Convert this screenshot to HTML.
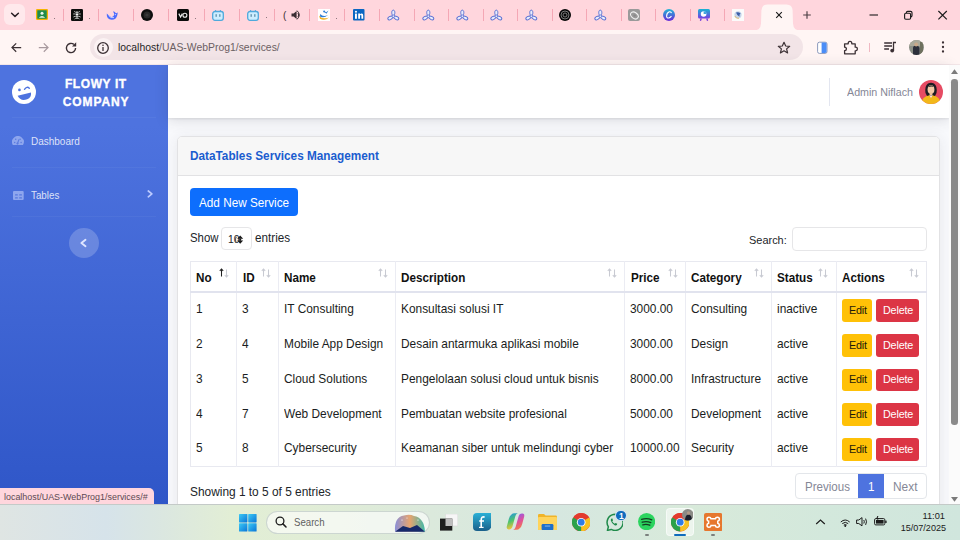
<!DOCTYPE html><html><head><meta charset="utf-8"><style>
*{box-sizing:border-box;margin:0;padding:0}
html,body{width:960px;height:540px;overflow:hidden;font-family:"Liberation Sans",sans-serif;background:#f8f9fc}
.a{position:absolute}
.t{position:absolute;white-space:nowrap;line-height:1}
</style></head><body><div class="a" style="left:0px;top:0px;width:960px;height:30px;background:#ffd6dd"></div>
<div class="a" style="left:0px;top:30px;width:960px;height:35px;background:#fff5f4"></div>
<div class="a" style="left:0px;top:64px;width:960px;height:1px;background:#f3e6e8"></div>
<div class="a" style="left:4px;top:4px;width:21px;height:21px;background:#ffe9ec;border-radius:6px"></div>
<svg class="a" style="left:9px;top:10px;" width="12" height="10" viewBox="0 0 12 10"><path d="M2.6 3.2 L6 6.4 L9.4 3.2" stroke="#2a2126" stroke-width="1.5" fill="none" stroke-linecap="round" stroke-linejoin="round"/></svg>
<svg class="a" style="left:35.7px;top:9px;" width="12" height="12" viewBox="0 0 12 12"><rect x="0.6" y="0.6" width="10.8" height="9.8" rx="1" fill="#1f8b4c" stroke="#f5b400" stroke-width="1.3"/><circle cx="6" cy="4.2" r="1.5" fill="#e8f5e9"/><path d="M2.8 8.8 Q6 5.3 9.2 8.8Z" fill="#e8f5e9"/></svg>
<div class="a" style="left:62.5px;top:9.3px;width:1px;height:11.5px;background:#f4a7b5"></div>
<svg class="a" style="left:70.8px;top:9px;" width="12" height="12" viewBox="0 0 12 12"><rect x="0" y="0" width="12" height="12" rx="1.2" fill="#0c0c0c"/><g stroke="#e8e8e8" stroke-width=".75" fill="none"><path d="M6 2 V10"/><path d="M3.2 2.4 Q4.6 3.6 6 3.4 Q7.4 3.6 8.8 2.4"/><path d="M2.2 5 Q4 4.6 6 5.6 Q8 4.6 9.8 5"/><path d="M2.4 8 Q4 6.8 6 7.4 Q8 6.8 9.6 8"/><path d="M3.6 10 Q4.8 8.8 6 9.2 Q7.2 8.8 8.4 10"/></g><circle cx="6" cy="5.6" r="1" fill="#fff"/></svg>
<div class="a" style="left:97.6px;top:9.3px;width:1px;height:11.5px;background:#f4a7b5"></div>
<svg class="a" style="left:105.9px;top:9px;" width="12" height="12" viewBox="0 0 12 12"><path d="M0.8 4.6 Q0.2 10.4 5.8 10.8 Q10.2 10.8 11.2 6.6 Q11.8 4.6 11.6 3.2 Q10.8 4.4 9.8 4.2 Q9 2 7 2.6 Q8.8 4.4 7.9 6.6 Q6.6 8.8 4.2 7.4 Q2.2 6 0.8 4.6Z" fill="#4d6bfe"/><path d="M2.6 6.4 Q4.6 9.6 8 8.6" stroke="#dfe4ff" stroke-width=".8" fill="none"/><circle cx="9.3" cy="5.6" r=".65" fill="#dfe4ff"/></svg>
<div class="a" style="left:132.7px;top:9.3px;width:1px;height:11.5px;background:#f4a7b5"></div>
<svg class="a" style="left:141.3px;top:9px;" width="12" height="12" viewBox="0 0 12 12"><circle cx="6" cy="6" r="6" fill="#0e0e0e"/><circle cx="6" cy="6" r="3.5" fill="#2a2a2a"/><circle cx="6" cy="6" r="1.6" fill="#3a3a3a"/></svg>
<div class="a" style="left:168.1px;top:9.3px;width:1px;height:11.5px;background:#f4a7b5"></div>
<svg class="a" style="left:176.8px;top:9px;" width="12" height="12" viewBox="0 0 12 12"><rect x="0" y="0" width="12" height="12" rx="1.6" fill="#0a0a0a"/><path d="M1.8 4.6 L3.6 8 L5.4 4.6" stroke="#eee" stroke-width="1.2" fill="none"/><circle cx="7.9" cy="6.3" r="2" stroke="#eee" stroke-width="1.1" fill="none"/></svg>
<div class="a" style="left:203.6px;top:9.3px;width:1px;height:11.5px;background:#f4a7b5"></div>
<svg class="a" style="left:211.9px;top:9px;" width="12" height="12" viewBox="0 0 12 12"><path d="M3.2 1 L4.6 2.6 M8.8 1 L7.4 2.6" stroke="#4fa9dc" stroke-width="1"/><rect x="0.7" y="2.5" width="10.6" height="8.8" rx="2.2" fill="#cdeeff" stroke="#4fa9dc" stroke-width="1.3"/><rect x="3.6" y="5.2" width="1.1" height="2.6" fill="#4b7f9c"/><rect x="7.3" y="5.2" width="1.1" height="2.6" fill="#4b7f9c"/></svg>
<div class="a" style="left:238.7px;top:9.3px;width:1px;height:11.5px;background:#f4a7b5"></div>
<svg class="a" style="left:247.1px;top:9px;" width="12" height="12" viewBox="0 0 12 12"><path d="M3.2 1 L4.6 2.6 M8.8 1 L7.4 2.6" stroke="#4fa9dc" stroke-width="1"/><rect x="0.7" y="2.5" width="10.6" height="8.8" rx="2.2" fill="#cdeeff" stroke="#4fa9dc" stroke-width="1.3"/><rect x="3.6" y="5.2" width="1.1" height="2.6" fill="#4b7f9c"/><rect x="7.3" y="5.2" width="1.1" height="2.6" fill="#4b7f9c"/></svg>
<div class="a" style="left:273.9px;top:9.3px;width:1px;height:11.5px;background:#f4a7b5"></div>
<div class="a" style="left:309.0px;top:9.3px;width:1px;height:11.5px;background:#f4a7b5"></div>
<svg class="a" style="left:317.5px;top:9px;" width="12" height="12" viewBox="0 0 12 12"><rect x="0" y="0" width="12" height="12" fill="#fff"/><path d="M1 6.5 Q4 11 11 8.4 Q7 12.5 2 9.8Z" fill="#f0b020"/><path d="M2.2 5 Q5 8.5 10 6 Q6 9.8 2 7.5Z" fill="#2d7fd6"/><path d="M4.5 1.5 L8.5 4.8 L10.5 1.5 L8.2 3.2Z" fill="#2d7fd6"/><circle cx="6.2" cy="2.4" r="1" fill="#2d7fd6"/></svg>
<div class="a" style="left:344.3px;top:9.3px;width:1px;height:11.5px;background:#f4a7b5"></div>
<svg class="a" style="left:352.5px;top:9px;" width="12" height="12" viewBox="0 0 12 12"><rect x="0" y="0" width="11.5" height="11.5" rx="1" fill="#0a66c2"/><rect x="2" y="4.6" width="1.9" height="5.2" fill="#fff"/><circle cx="2.95" cy="2.7" r="1.05" fill="#fff"/><path d="M5.2 4.6 H7 V5.4 Q7.6 4.4 8.8 4.5 Q10.2 4.6 10.2 6.4 V9.8 H8.4 V6.8 Q8.4 5.9 7.8 5.9 Q7 5.9 7 6.9 V9.8 H5.2Z" fill="#fff"/></svg>
<div class="a" style="left:379.3px;top:9.3px;width:1px;height:11.5px;background:#f4a7b5"></div>
<svg class="a" style="left:387.1px;top:8.8px;" width="13" height="12" viewBox="0 0 13 12"><g fill="#e8ecfc" stroke="#5a70d2" stroke-width="1"><path d="M6.3 7.2 C4.2 5.6 4.3 1.1 6.3 1.1 C8.3 1.1 8.4 5.6 6.3 7.2Z"/><path d="M6.3 7.2 C4.2 5.6 4.3 1.1 6.3 1.1 C8.3 1.1 8.4 5.6 6.3 7.2Z" transform="rotate(120 6.3 7.2)"/><path d="M6.3 7.2 C4.2 5.6 4.3 1.1 6.3 1.1 C8.3 1.1 8.4 5.6 6.3 7.2Z" transform="rotate(240 6.3 7.2)"/></g><circle cx="6.3" cy="7.2" r="1.3" fill="#e8ecfc" stroke="#5a70d2" stroke-width=".8"/></svg>
<div class="a" style="left:413.9px;top:9.3px;width:1px;height:11.5px;background:#f4a7b5"></div>
<svg class="a" style="left:421.6px;top:8.8px;" width="13" height="12" viewBox="0 0 13 12"><g fill="#e8ecfc" stroke="#5a70d2" stroke-width="1"><path d="M6.3 7.2 C4.2 5.6 4.3 1.1 6.3 1.1 C8.3 1.1 8.4 5.6 6.3 7.2Z"/><path d="M6.3 7.2 C4.2 5.6 4.3 1.1 6.3 1.1 C8.3 1.1 8.4 5.6 6.3 7.2Z" transform="rotate(120 6.3 7.2)"/><path d="M6.3 7.2 C4.2 5.6 4.3 1.1 6.3 1.1 C8.3 1.1 8.4 5.6 6.3 7.2Z" transform="rotate(240 6.3 7.2)"/></g><circle cx="6.3" cy="7.2" r="1.3" fill="#e8ecfc" stroke="#5a70d2" stroke-width=".8"/></svg>
<div class="a" style="left:448.4px;top:9.3px;width:1px;height:11.5px;background:#f4a7b5"></div>
<svg class="a" style="left:456.0px;top:8.8px;" width="13" height="12" viewBox="0 0 13 12"><g fill="#e8ecfc" stroke="#5a70d2" stroke-width="1"><path d="M6.3 7.2 C4.2 5.6 4.3 1.1 6.3 1.1 C8.3 1.1 8.4 5.6 6.3 7.2Z"/><path d="M6.3 7.2 C4.2 5.6 4.3 1.1 6.3 1.1 C8.3 1.1 8.4 5.6 6.3 7.2Z" transform="rotate(120 6.3 7.2)"/><path d="M6.3 7.2 C4.2 5.6 4.3 1.1 6.3 1.1 C8.3 1.1 8.4 5.6 6.3 7.2Z" transform="rotate(240 6.3 7.2)"/></g><circle cx="6.3" cy="7.2" r="1.3" fill="#e8ecfc" stroke="#5a70d2" stroke-width=".8"/></svg>
<div class="a" style="left:482.8px;top:9.3px;width:1px;height:11.5px;background:#f4a7b5"></div>
<svg class="a" style="left:490.4px;top:8.8px;" width="13" height="12" viewBox="0 0 13 12"><g fill="#e8ecfc" stroke="#5a70d2" stroke-width="1"><path d="M6.3 7.2 C4.2 5.6 4.3 1.1 6.3 1.1 C8.3 1.1 8.4 5.6 6.3 7.2Z"/><path d="M6.3 7.2 C4.2 5.6 4.3 1.1 6.3 1.1 C8.3 1.1 8.4 5.6 6.3 7.2Z" transform="rotate(120 6.3 7.2)"/><path d="M6.3 7.2 C4.2 5.6 4.3 1.1 6.3 1.1 C8.3 1.1 8.4 5.6 6.3 7.2Z" transform="rotate(240 6.3 7.2)"/></g><circle cx="6.3" cy="7.2" r="1.3" fill="#e8ecfc" stroke="#5a70d2" stroke-width=".8"/></svg>
<div class="a" style="left:517.2px;top:9.3px;width:1px;height:11.5px;background:#f4a7b5"></div>
<svg class="a" style="left:524.7px;top:8.8px;" width="13" height="12" viewBox="0 0 13 12"><g fill="#e8ecfc" stroke="#5a70d2" stroke-width="1"><path d="M6.3 7.2 C4.2 5.6 4.3 1.1 6.3 1.1 C8.3 1.1 8.4 5.6 6.3 7.2Z"/><path d="M6.3 7.2 C4.2 5.6 4.3 1.1 6.3 1.1 C8.3 1.1 8.4 5.6 6.3 7.2Z" transform="rotate(120 6.3 7.2)"/><path d="M6.3 7.2 C4.2 5.6 4.3 1.1 6.3 1.1 C8.3 1.1 8.4 5.6 6.3 7.2Z" transform="rotate(240 6.3 7.2)"/></g><circle cx="6.3" cy="7.2" r="1.3" fill="#e8ecfc" stroke="#5a70d2" stroke-width=".8"/></svg>
<div class="a" style="left:551.5px;top:9.3px;width:1px;height:11.5px;background:#f4a7b5"></div>
<svg class="a" style="left:559.2px;top:9px;" width="12" height="12" viewBox="0 0 12 12"><circle cx="6" cy="6" r="6" fill="#050505"/><circle cx="6" cy="6" r="4" fill="none" stroke="#777" stroke-width="1"/><circle cx="6" cy="6" r="2" fill="none" stroke="#888" stroke-width=".9"/></svg>
<div class="a" style="left:586.0px;top:9.3px;width:1px;height:11.5px;background:#f4a7b5"></div>
<svg class="a" style="left:593.8px;top:8.8px;" width="13" height="12" viewBox="0 0 13 12"><g fill="#e8ecfc" stroke="#5a70d2" stroke-width="1"><path d="M6.3 7.2 C4.2 5.6 4.3 1.1 6.3 1.1 C8.3 1.1 8.4 5.6 6.3 7.2Z"/><path d="M6.3 7.2 C4.2 5.6 4.3 1.1 6.3 1.1 C8.3 1.1 8.4 5.6 6.3 7.2Z" transform="rotate(120 6.3 7.2)"/><path d="M6.3 7.2 C4.2 5.6 4.3 1.1 6.3 1.1 C8.3 1.1 8.4 5.6 6.3 7.2Z" transform="rotate(240 6.3 7.2)"/></g><circle cx="6.3" cy="7.2" r="1.3" fill="#e8ecfc" stroke="#5a70d2" stroke-width=".8"/></svg>
<div class="a" style="left:620.6px;top:9.3px;width:1px;height:11.5px;background:#f4a7b5"></div>
<svg class="a" style="left:628.4px;top:9px;" width="12" height="12" viewBox="0 0 12 12"><rect x="0" y="0" width="12" height="12" rx="2" fill="#9a9a9a"/><ellipse cx="6.4" cy="6.4" rx="4.2" ry="3" transform="rotate(35 6.4 6.4)" fill="none" stroke="#f2f2f2" stroke-width="1.1"/><circle cx="6.6" cy="6.6" r="1.2" fill="#888"/></svg>
<div class="a" style="left:655.2px;top:9.3px;width:1px;height:11.5px;background:#f4a7b5"></div>
<svg class="a" style="left:662.9px;top:9px;" width="12" height="12" viewBox="0 0 12 12"><defs><linearGradient id="cg" x1="0" y1="0" x2="0" y2="1"><stop offset="0" stop-color="#1fb7d6"/><stop offset="1" stop-color="#6a2ad8"/></linearGradient></defs><circle cx="6" cy="6" r="6" fill="url(#cg)"/><path d="M8.3 3.6 Q7.6 2.4 6.3 2.8 Q3.6 3.8 3.6 7.2 Q3.8 9.4 6 8.9 Q7.5 8.5 8.2 7.4" stroke="#fff" stroke-width="1.1" fill="none" stroke-linecap="round"/></svg>
<div class="a" style="left:689.7px;top:9.3px;width:1px;height:11.5px;background:#f4a7b5"></div>
<svg class="a" style="left:697.5px;top:9px;" width="12" height="12" viewBox="0 0 12 12"><defs><linearGradient id="pg" x1="0" y1="0" x2="0" y2="1"><stop offset="0" stop-color="#17b5d3"/><stop offset="1" stop-color="#7a3be3"/></linearGradient></defs><rect x="0" y="0" width="12" height="9.6" rx="1.5" fill="url(#pg)"/><path d="M3.2 9.5 L2.4 11.8 M8.8 9.5 L9.6 11.8" stroke="#6d35dc" stroke-width="1.3"/><circle cx="5.6" cy="5" r="2.8" fill="#fff"/><path d="M5.6 5 V2.2 A2.8 2.8 0 0 1 8.4 5Z" fill="#40a6dc"/></svg>
<div class="a" style="left:724.3px;top:9.3px;width:1px;height:11.5px;background:#f4a7b5"></div>
<svg class="a" style="left:732.0px;top:9px;" width="12" height="12" viewBox="0 0 12 12"><rect x="0" y="0" width="12" height="12" fill="#fbfbfb"/><circle cx="6" cy="5.8" r="3.6" fill="#c6d5ea"/><path d="M4 3.5 Q6.5 2.5 8.6 4.5 Q7 5.5 7.5 7.8 Q5.3 7 4 3.5Z" fill="#3b5fa8"/><path d="M2.8 7 Q4 9.8 7 9.3" stroke="#e3b860" stroke-width=".9" fill="none"/></svg>
<div class="t" style="left:283.20px;top:10.44px;font-size:10.70px;color:#3a2e33;font-weight:400;transform:scaleX(0.9346);transform-origin:0 0;">(</div>
<svg class="a" style="left:290px;top:9px;" width="12" height="12" viewBox="0 0 12 12"><path d="M1.5 4.5 H3.6 L6.6 2 V10 L3.6 7.5 H1.5Z" fill="#3a2e33"/><path d="M8 4 Q9.3 6 8 8" stroke="#3a2e33" stroke-width="1" fill="none"/><path d="M7 1.6 Q11.6 6 7 10.4" stroke="#3a2e33" stroke-width="1" fill="none"/></svg>
<div class="a" style="left:54.0px;top:17.5px;width:1.1px;height:1.1px;background:#6b5a60;border-radius:50%"></div>
<div class="a" style="left:89.1px;top:17.9px;width:1.1px;height:1.1px;background:#6b5a60;border-radius:50%"></div>
<div class="a" style="left:194.8px;top:18.0px;width:1.1px;height:1.1px;background:#6b5a60;border-radius:50%"></div>
<div class="a" style="left:265.5px;top:17.0px;width:1.1px;height:1.1px;background:#6b5a60;border-radius:50%"></div>
<div class="a" style="left:336.3px;top:17.5px;width:1.1px;height:1.1px;background:#6b5a60;border-radius:50%"></div>
<svg class="a" style="left:754px;top:4px" width="46" height="27" viewBox="0 0 46 27"><path d="M0 26.5 Q6.5 26.5 7 19.5 L7.4 6.5 Q7.6 0.4 13.5 0.4 L32.5 0.4 Q38.4 0.4 38.6 6.5 L39 19.5 Q39.5 26.5 46 26.5 Z" fill="#fff5f4"/></svg>
<svg class="a" style="left:774px;top:10px;" width="10" height="10" viewBox="0 0 10 10"><path d="M2.2 2.2 L7.8 7.8 M7.8 2.2 L2.2 7.8" stroke="#1b1b1b" stroke-width="1.15"/></svg>
<svg class="a" style="left:800.7px;top:9px;" width="12" height="12" viewBox="0 0 12 12"><path d="M6 2.2 V9.8 M2.2 6 H9.8" stroke="#4a3d42" stroke-width="1.15"/></svg>
<svg class="a" style="left:866px;top:9px;" width="14" height="12" viewBox="0 0 14 12"><path d="M3.5 6 H12" stroke="#1b1b1b" stroke-width="1.1"/></svg>
<svg class="a" style="left:901px;top:8px;" width="14" height="14" viewBox="0 0 14 14"><rect x="3.6" y="5.2" width="6" height="6" rx="1.2" fill="none" stroke="#1b1b1b" stroke-width="1.15"/><path d="M5.4 5.1 V4.6 Q5.4 3.3 6.7 3.3 H9.6 Q11 3.3 11 4.7 V7.6 Q11 8.9 9.7 8.9 H9.6" fill="none" stroke="#1b1b1b" stroke-width="1.15"/></svg>
<svg class="a" style="left:935px;top:8px;" width="14" height="14" viewBox="0 0 14 14"><path d="M3.4 3 L11.8 11.4 M11.8 3 L3.4 11.4" stroke="#1b1b1b" stroke-width="1.15"/></svg>
<div class="a" style="left:90px;top:34.2px;width:713px;height:25.6px;background:#f2e4e7;border-radius:13px"></div>
<div class="a" style="left:93.5px;top:37.5px;width:19px;height:19px;background:#fbf2f3;border-radius:50%"></div>
<svg class="a" style="left:10px;top:41px;" width="14" height="14" viewBox="0 0 14 14"><path d="M11.2 6.6 H2.2 M6.2 2.4 L2 6.6 L6.2 10.8" stroke="#3b3034" stroke-width="1.25" fill="none"/></svg>
<svg class="a" style="left:37px;top:41px;" width="14" height="14" viewBox="0 0 14 14"><path d="M1.8 6.6 H10.8 M6.8 2.4 L11 6.6 L6.8 10.8" stroke="#a8999e" stroke-width="1.25" fill="none"/></svg>
<svg class="a" style="left:63.6px;top:40.6px;" width="14" height="14" viewBox="0 0 14 14"><path d="M11.6 7 A4.6 4.6 0 1 1 9.9 3.4" stroke="#3b3034" stroke-width="1.4" fill="none"/><path d="M12.2 1.2 V5.4 H8" fill="#3b3034"/></svg>
<svg class="a" style="left:96.3px;top:40.6px;" width="14" height="14" viewBox="0 0 14 14"><circle cx="7" cy="7" r="5.3" stroke="#3b3034" stroke-width="1.3" fill="none"/><rect x="6.35" y="6" width="1.3" height="4" fill="#3b3034"/><circle cx="7" cy="4.2" r=".8" fill="#3b3034"/></svg>
<svg class="a" style="left:777px;top:41px;" width="14" height="14" viewBox="0 0 14 14"><path d="M7 1.3 L8.7 5 L12.7 5.3 L9.6 7.9 L10.6 11.9 L7 9.8 L3.4 11.9 L4.4 7.9 L1.3 5.3 L5.3 5 Z" stroke="#3b3034" stroke-width="1.2" fill="none" stroke-linejoin="round"/></svg>
<svg class="a" style="left:815px;top:39px;" width="14" height="17" viewBox="0 0 14 17"><rect x="2.6" y="3.2" width="9.4" height="11.2" rx="1.8" fill="#fff" stroke="#7f8fb5" stroke-width=".9"/><path d="M6.6 3.6 H10.2 Q11.6 3.6 11.6 5 V12.6 Q11.6 14 10.2 14 H6.6Z" fill="#4b8df7"/></svg>
<svg class="a" style="left:842.5px;top:40px;" width="16" height="15" viewBox="0 0 16 15"><path d="M1.6 3.8 H5.2 V3.4 Q5.2 1.4 7 1.4 Q8.8 1.4 8.8 3.4 V3.8 H12.2 V7.2 H12.6 Q14.4 7.2 14.4 9 Q14.4 10.8 12.6 10.8 H12.2 V13.8 H1.6 V10.6 Q3.4 10.6 3.4 8.9 Q3.4 7.2 1.6 7.2Z" stroke="#3b3034" stroke-width="1.3" fill="none" stroke-linejoin="round"/></svg>
<div class="a" style="left:869px;top:42.5px;width:1px;height:9.5px;background:#f0b8c2"></div>
<svg class="a" style="left:883px;top:40px;" width="14" height="14" viewBox="0 0 14 14"><path d="M1.2 3 H9 M1.2 6 H9 M1.2 9 H6" stroke="#3b3034" stroke-width="1.3"/><circle cx="9.2" cy="10.6" r="1.9" fill="#3b3034"/><path d="M10.5 10.6 V2.5 H13" stroke="#3b3034" stroke-width="1.3" fill="none"/></svg>
<svg class="a" style="left:909px;top:40px;" width="15" height="15" viewBox="0 0 15 15"><defs><clipPath id="pa"><circle cx="7.5" cy="7.5" r="7.5"/></clipPath></defs><g clip-path="url(#pa)"><rect width="15" height="15" fill="#8b8f86"/><rect x="0" y="0" width="15" height="6" fill="#a9a99a"/><path d="M4 15 V8 Q4 5.5 7 5.5 Q10 5.5 10.5 8 V15Z" fill="#2b2f3a"/><circle cx="7.2" cy="4.6" r="2" fill="#c9a98a"/><rect x="11" y="2" width="3" height="13" fill="#6e705e"/></g></svg>
<svg class="a" style="left:937px;top:40px;" width="12" height="14" viewBox="0 0 12 14"><circle cx="6" cy="2.5" r="1.15" fill="#3b3034"/><circle cx="6" cy="7" r="1.15" fill="#3b3034"/><circle cx="6" cy="11.5" r="1.15" fill="#3b3034"/></svg>
<div class="a" style="left:0px;top:65px;width:168px;height:439px;background:linear-gradient(180deg,#4e73df 60px,#224abe 600px)"></div>
<div class="a" style="left:168px;top:65px;width:781px;height:53px;background:#fff;box-shadow:0 1px 2px rgba(58,59,69,.10),0 2px 13px rgba(58,59,69,.16)"></div>
<div class="a" style="left:176.5px;top:136.3px;width:763px;height:400px;background:#fff;border:1px solid #e2e2e4;border-radius:5px;box-shadow:0 2px 14px rgba(58,59,69,.09)"></div>
<div class="a" style="left:177.5px;top:137.3px;width:761px;height:38.7px;background:#f7f7f7;border-bottom:1px solid #e2e2e4;border-radius:4px 4px 0 0"></div>
<div class="a" style="left:949px;top:65px;width:11px;height:439px;background:#fbfbfb"></div>
<div class="a" style="left:951px;top:79px;width:6.5px;height:345.6px;background:#8a8a8a;border-radius:3.2px"></div>
<svg class="a" style="left:950px;top:68px;" width="10" height="7" viewBox="0 0 10 7"><path d="M1 6 L4.5 1.2 L8 6Z" fill="#7a7a7a"/></svg>
<svg class="a" style="left:950px;top:496px;" width="10" height="7" viewBox="0 0 10 7"><path d="M1 1 L4.5 5.8 L8 1Z" fill="#7a7a7a"/></svg>
<div class="a" style="left:12px;top:117px;width:144px;height:1px;background:rgba(255,255,255,.045)"></div>
<div class="a" style="left:12px;top:166.5px;width:144px;height:1px;background:rgba(255,255,255,.045)"></div>
<div class="a" style="left:12px;top:215.5px;width:144px;height:1px;background:rgba(255,255,255,.045)"></div>
<svg class="a" style="left:11.85px;top:79.6px;" width="24" height="24" viewBox="0 0 24 24"><circle cx="12" cy="12" r="12" fill="#fff"/><circle cx="7.45" cy="9.9" r="1.35" fill="#4e73df"/><path d="M12.5 9.3 Q15 5.9 17.3 8.2" stroke="#4e73df" stroke-width="1.4" fill="none" stroke-linecap="round"/><path d="M5.6 15.8 L19 12.4 Q19.6 17.3 15.2 19.2 Q8.6 21.7 5.6 15.8 Z" fill="#4e73df"/></svg>
<svg class="a" style="left:12.4px;top:136px;" width="12" height="9" viewBox="0 0 12 9"><path d="M0.82 9 A5.9 5.9 0 1 1 10.98 9 Z" fill="#8ea6ee"/><circle cx="2.7" cy="6.4" r=".75" fill="#5a7be0"/><circle cx="9.1" cy="6.4" r=".75" fill="#5a7be0"/><circle cx="3.7" cy="3.2" r=".75" fill="#5a7be0"/><circle cx="8.1" cy="3.2" r=".75" fill="#5a7be0"/><path d="M5.4 7.8 L7 3.4" stroke="#5a7be0" stroke-width="1.1"/><circle cx="5.5" cy="7.6" r="1.1" fill="#5a7be0"/></svg>
<svg class="a" style="left:12.8px;top:190.7px;" width="11" height="9" viewBox="0 0 11 9"><rect x="0" y="0" width="10.7" height="9" rx="1" fill="#8ea6ee"/><rect x="2" y="3.2" width="2.9" height="1.2" rx=".5" fill="#5678de"/><rect x="6.1" y="3.2" width="2.9" height="1.2" rx=".5" fill="#5678de"/><rect x="2" y="6.2" width="2.9" height="1.2" rx=".5" fill="#5678de"/><rect x="6.1" y="6.2" width="2.9" height="1.2" rx=".5" fill="#5678de"/></svg>
<svg class="a" style="left:146px;top:189px;" width="8" height="10" viewBox="0 0 8 10"><path d="M2.3 2 L5.9 4.8 L2.3 7.8" stroke="#bccbff" stroke-width="1.7" fill="none" stroke-linecap="round" stroke-linejoin="round"/></svg>
<div class="a" style="left:69px;top:227.5px;width:30px;height:30px;border-radius:50%;background:rgba(255,255,255,.2)"></div>
<svg class="a" style="left:78px;top:236px;" width="10" height="12" viewBox="0 0 10 12"><path d="M7.5 3.8 L3.4 7.1 L7.5 10.2" stroke="#dfe6ff" stroke-width="1.9" fill="none" stroke-linecap="round" stroke-linejoin="round"/></svg>
<div class="a" style="left:828.5px;top:77.5px;width:1px;height:28.5px;background:#e3e6f0"></div>
<svg class="a" style="left:918.5px;top:79.7px;" width="24" height="24" viewBox="0 0 24 24"><defs><clipPath id="av"><circle cx="12" cy="12" r="12"/></clipPath></defs><g clip-path="url(#av)"><rect width="24" height="24" fill="#e64b63"/><path d="M6.5 13 Q5.5 6 9 3.6 Q12 2 15 3.6 Q18.5 6 17.5 13 L16 16 L8 16 Z" fill="#1c1c22"/><ellipse cx="12" cy="9.5" rx="3.4" ry="4.3" fill="#f4c9a6"/><path d="M8.6 7.2 Q12 3.8 15.4 7.2 Q13 5.6 8.6 7.2Z" fill="#1c1c22"/><rect x="10.6" y="12.5" width="2.8" height="3" fill="#f0bf99"/><path d="M2 24 Q3 16.5 10.5 15.2 L12 17.5 L13.5 15.2 Q21 16.5 22 24 Z" fill="#f2b81a"/><path d="M10.5 15.2 L12 18 L13.5 15.2 L12.9 15 L12 16.6 L11.1 15Z" fill="#fff"/></g></svg>
<div class="a" style="left:0px;top:504px;width:960px;height:36px;background:linear-gradient(90deg,#dfe5e3 0%,#d6e3ea 11%,#dbe7e0 17%,#e2eed5 24%,#e1edd6 32%,#dbe9dc 45%,#d6e7e0 58%,#d8eada 72%,#d3e8dc 86%,#d0e6dd 100%)"></div>
<div class="a" style="left:0px;top:503.6px;width:960px;height:0.8px;background:#c4cac8"></div>
<svg class="a" style="left:238.5px;top:513.8px;" width="18" height="18" viewBox="0 0 18 18"><defs><linearGradient id="wg" x1="0" y1="0" x2="1" y2="1"><stop offset="0" stop-color="#3ccaf4"/><stop offset="1" stop-color="#0a74d8"/></linearGradient></defs><rect x="0" y="0" width="8.4" height="8.4" rx=".6" fill="url(#wg)"/><rect x="9.2" y="0" width="8.4" height="8.4" rx=".6" fill="url(#wg)"/><rect x="0" y="9.2" width="8.4" height="8.4" rx=".6" fill="url(#wg)"/><rect x="9.2" y="9.2" width="8.4" height="8.4" rx=".6" fill="url(#wg)"/></svg>
<div class="a" style="left:266.3px;top:510.6px;width:164px;height:23px;background:rgba(255,255,255,.62);border:1px solid rgba(200,210,205,.9);border-radius:12px"></div>
<svg class="a" style="left:274.5px;top:516px;" width="12" height="12" viewBox="0 0 12 12"><circle cx="5" cy="5" r="3.9" stroke="#1d1d1d" stroke-width="1.3" fill="none"/><path d="M7.9 7.9 L11 11" stroke="#1d1d1d" stroke-width="1.5" stroke-linecap="round"/></svg>
<div class="t" style="left:293.70px;top:516.92px;font-size:11.19px;color:#5f5f5f;font-weight:400;transform:scaleX(0.8621);transform-origin:0 0;">Search</div>
<svg class="a" style="left:394px;top:514px;" width="32" height="18" viewBox="0 0 32 18"><defs><linearGradient id="sg" x1="0" y1="0" x2="1" y2="0"><stop offset="0" stop-color="#8a8fd8"/><stop offset=".5" stop-color="#e6a46f"/><stop offset="1" stop-color="#3fb8a8"/></linearGradient></defs><path d="M1 17.5 Q0 3 10 1.5 Q16 0 20 2 Q30 3.5 31 17.5Z" fill="url(#sg)"/><path d="M1 17.8 L9 12 L16 14 L23 11 L31 17.8Z" fill="#17296a"/><circle cx="8" cy="6" r=".6" fill="#fff"/><circle cx="13" cy="4" r=".5" fill="#fff"/><circle cx="24" cy="6" r=".6" fill="#fff"/></svg>
<svg class="a" style="left:439.8px;top:513.7px;" width="18" height="17" viewBox="0 0 18 17"><rect x="5.5" y="0" width="12.3" height="12" fill="#f6f6f6" stroke="#dadada" stroke-width=".6"/><rect x="0" y="4.6" width="12.3" height="12" fill="#1e1e1e"/><rect x="5.5" y="4.6" width="6.8" height="7.4" fill="#bdbdbd"/></svg>
<svg class="a" style="left:473px;top:513px;" width="18.3" height="18" viewBox="0 0 18.3 18"><defs><linearGradient id="fg" x1="0" y1="0" x2="0" y2="1"><stop offset="0" stop-color="#2ab0d6"/><stop offset="1" stop-color="#1a5f8a"/></linearGradient></defs><path d="M4 0 H18.3 V12 Q18.3 18 12 18 H4 Q0 18 0 14 V4 Q0 0 4 0Z" fill="url(#fg)"/><path d="M11.6 4.4 Q10.4 3.4 9.2 4.2 Q8.2 5 8.2 7 V14.4 M6.2 8 H11" stroke="#fff" stroke-width="1.6" fill="none"/><path d="M6 14.4 H10.6" stroke="#fff" stroke-width="1.2"/></svg>
<svg class="a" style="left:505.8px;top:513.2px;" width="19" height="17" viewBox="0 0 19 17"><defs><linearGradient id="cp1" x1="0" y1="0" x2="0.3" y2="1"><stop offset="0" stop-color="#1e8ff0"/><stop offset=".55" stop-color="#4fc46a"/><stop offset="1" stop-color="#f5c33b"/></linearGradient><linearGradient id="cp2" x1="0.3" y1="0" x2="0.7" y2="1"><stop offset="0" stop-color="#8a5cf0"/><stop offset=".5" stop-color="#e0509a"/><stop offset="1" stop-color="#f7823a"/></linearGradient></defs><path d="M5.5 1.5 Q6.5 0.3 8.5 0.3 H11.8 Q10 0.8 9.4 3 L6.6 13 Q5.8 16.4 3 16.4 H2.6 Q0.2 16.4 0.8 13.6 L2.8 6 Q3.6 2.8 5.5 1.5Z" fill="url(#cp1)"/><path d="M13.5 15.5 Q12.5 16.7 10.5 16.7 H7.2 Q9 16.2 9.6 14 L12.4 4 Q13.2 0.6 16 0.6 H16.4 Q18.8 0.6 18.2 3.4 L16.2 11 Q15.4 14.2 13.5 15.5Z" fill="url(#cp2)"/><path d="M6.2 5.5 H12.8 Q14 5.5 13.6 7 L12.6 10.6 Q12.2 11.6 11 11.6 H6.4 Q5.2 11.6 5.6 10.2 L6.6 6.4Z" fill="#fff" opacity=".0"/></svg>
<svg class="a" style="left:538.3px;top:513.9px;" width="19" height="16.2" viewBox="0 0 19 16.2"><path d="M0 1.2 Q0 0 1.2 0 H6 L7.6 1.6 H17.8 Q19 1.6 19 2.8 V15 Q19 16.2 17.8 16.2 H1.2 Q0 16.2 0 15Z" fill="#f0b429"/><rect x="0" y="3" width="19" height="13.2" rx="1" fill="#ffd45c"/><rect x="3.6" y="10" width="11.8" height="6.2" rx="1.3" fill="#1f6fc9"/><rect x="6.8" y="11.6" width="5.4" height=".9" fill="#8fc0f0"/></svg>
<svg class="a" style="left:571.7px;top:512.9px;" width="18.4" height="18.4" viewBox="0 0 18.4 18.4"><circle cx="9.2" cy="9.2" r="9.2" fill="#e33b2e"/><path d="M9.2 9.2 L1.2 4.6 A9.2 9.2 0 0 0 9.2 18.4 Z" fill="#2aa24c"/><path d="M9.2 9.2 L17.2 4.6 A9.2 9.2 0 0 1 9.2 18.4 Z" fill="#f7c221"/><path d="M9.2 4.6 H17.2 A9.2 9.2 0 0 0 1.2 4.6 Z" fill="#e33b2e"/><circle cx="9.2" cy="9.2" r="4.3" fill="#fff"/><circle cx="9.2" cy="9.2" r="3.4" fill="#2f7de6"/></svg>
<svg class="a" style="left:604.8px;top:512.9px;" width="18.5" height="18.5" viewBox="0 0 18.5 18.5"><path d="M2.4 17.4 L3.4 13.8 A8 8 0 1 1 6.2 16.4 Z" fill="none" stroke="#1f8a4a" stroke-width="1.5" stroke-linejoin="round"/><path d="M6.6 5.6 Q5.6 6 5.8 7.6 Q6.6 10.6 9.6 12.2 Q11.2 12.8 12 11.8 L12.2 10.8 L10.6 10 L9.8 10.8 Q8 10 7.2 8.2 L8 7.4 L7.4 5.6 Z" fill="#1f8a4a"/></svg>
<div class="a" style="left:615.4px;top:509.8px;width:11.4px;height:11.4px;background:#0f6cbd;border-radius:50%;border:1px solid rgba(255,255,255,.8)"></div>
<div class="t" style="left:618.60px;top:511.52px;font-size:8.84px;color:#fff;font-weight:700;transform:scaleX(0.9615);transform-origin:0 0;">1</div>
<svg class="a" style="left:638.3px;top:513.2px;" width="17.2" height="17.2" viewBox="0 0 17.2 17.2"><circle cx="8.6" cy="8.6" r="8.6" fill="#2bd45f"/><path d="M3.6 6.4 Q8.8 4.6 13.8 6.8 M4.2 9.2 Q8.6 7.8 12.8 9.6 M4.8 11.8 Q8.4 10.8 11.8 12.2" stroke="#143d22" stroke-width="1.35" fill="none" stroke-linecap="round"/></svg>
<div class="a" style="left:645.2px;top:534.2px;width:4px;height:1.8px;background:#7b807e;border-radius:1px"></div>
<div class="a" style="left:666px;top:508.2px;width:27.8px;height:27.8px;background:rgba(255,255,255,.5);border-radius:4px;border:1px solid rgba(255,255,255,.55)"></div>
<svg class="a" style="left:670.8px;top:513.2px;" width="18.4" height="18.4" viewBox="0 0 18.4 18.4"><circle cx="9.2" cy="9.2" r="9.2" fill="#e33b2e"/><path d="M9.2 9.2 L1.2 4.6 A9.2 9.2 0 0 0 9.2 18.4 Z" fill="#2aa24c"/><path d="M9.2 9.2 L17.2 4.6 A9.2 9.2 0 0 1 9.2 18.4 Z" fill="#f7c221"/><path d="M9.2 4.6 H17.2 A9.2 9.2 0 0 0 1.2 4.6 Z" fill="#e33b2e"/><circle cx="9.2" cy="9.2" r="4.3" fill="#fff"/><circle cx="9.2" cy="9.2" r="3.4" fill="#2f7de6"/></svg>
<svg class="a" style="left:681.8px;top:509.2px;" width="11.6" height="11.6" viewBox="0 0 11.6 11.6"><defs><clipPath id="cb"><circle cx="5.8" cy="5.8" r="5.8"/></clipPath></defs><g clip-path="url(#cb)"><rect width="12" height="12" fill="#8b8b86"/><path d="M3 12 Q3 6 6.5 5.5 Q10 6 10 12Z" fill="#1b1f2a"/><circle cx="6.5" cy="4" r="1.7" fill="#b09a86"/></g></svg>
<div class="a" style="left:674px;top:534.2px;width:12px;height:2.2px;background:#0f6cbd;border-radius:1px"></div>
<svg class="a" style="left:704px;top:512.9px;" width="18.3" height="18.3" viewBox="0 0 18.3 18.3"><rect x="0" y="0" width="18.3" height="18.3" rx="2" fill="#e6772e"/><path d="M5 4.2 Q3 4.2 3 6.2 Q3 7.8 4.6 8.2 V10.2 Q3 10.6 3 12.2 Q3 14.2 5 14.2 Q6.8 14.2 7 12.6 H11.4 Q11.6 14.2 13.4 14.2 Q15.4 14.2 15.4 12.2 Q15.4 10.6 13.8 10.2 V8.2 Q15.4 7.8 15.4 6.2 Q15.4 4.2 13.4 4.2 Q11.6 4.2 11.4 5.8 H7 Q6.8 4.2 5 4.2Z" fill="none" stroke="#fff" stroke-width="1.5"/></svg>
<div class="a" style="left:711px;top:534.2px;width:4px;height:1.8px;background:#7b807e;border-radius:1px"></div>
<svg class="a" style="left:815px;top:518px;" width="11" height="8" viewBox="0 0 11 8"><path d="M1.2 6 L5.5 2 L9.8 6" stroke="#1d1d1d" stroke-width="1.2" fill="none"/></svg>
<svg class="a" style="left:839.5px;top:518.5px;" width="10.5" height="8" viewBox="0 0 10.5 8"><path d="M0.8 3 Q5.25 -1 9.7 3 M2.3 4.6 Q5.25 2 8.2 4.6 M3.8 6.1 Q5.25 5 6.7 6.1" stroke="#1d1d1d" stroke-width="1" fill="none"/><circle cx="5.25" cy="7" r=".9" fill="#1d1d1d"/></svg>
<svg class="a" style="left:855.8px;top:517px;" width="12.5" height="9.5" viewBox="0 0 12.5 9.5"><path d="M0.6 3 H2.8 L6 0.6 V8.9 L2.8 6.5 H0.6Z" fill="none" stroke="#1d1d1d" stroke-width="1"/><path d="M7.8 3 Q8.8 4.75 7.8 6.5 M9.6 1.6 Q11.4 4.75 9.6 7.9" stroke="#1d1d1d" stroke-width="1" fill="none"/></svg>
<svg class="a" style="left:873.8px;top:516px;" width="13" height="9.5" viewBox="0 0 13 9.5"><rect x="0.6" y="2.6" width="10.2" height="6.3" rx="1.2" fill="none" stroke="#1d1d1d" stroke-width="1"/><rect x="2" y="4" width="7.6" height="3.6" fill="#1d1d1d"/><rect x="11.2" y="4.6" width="1.4" height="2.4" fill="#1d1d1d"/><path d="M3.4 0 L2 3 H3.6 L2.6 5.4 L5.2 2.2 H3.6 L4.4 0Z" fill="#1d1d1d"/></svg>
<div class="t" style="left:945.40px;top:510.98px;font-size:9.95px;color:#1b1b1b;font-weight:400;transform:translateX(-100%) scaleX(0.9346);transform-origin:100% 0;">11:01</div>
<div class="t" style="left:945.60px;top:523.38px;font-size:9.70px;color:#1b1b1b;font-weight:400;transform:translateX(-100%) scaleX(0.9346);transform-origin:100% 0;">15/07/2025</div>
<div class="a" style="left:0px;top:488px;width:153.7px;height:16px;background:#ffd6dd;border-radius:0 5px 0 0"></div>
<div class="t" style="left:3.50px;top:492.21px;font-size:9.56px;color:#5c4a52;font-weight:400;transform:scaleX(0.9346);transform-origin:0 0;">localhost/UAS-WebProg1/services/#</div>
<div class="t" style="left:117.50px;top:41.72px;font-size:11.20px;color:#6b5f63;font-weight:400;transform:scaleX(0.93);transform-origin:0 0;"><span style="color:#1f1f1f">localhost</span>/UAS-WebProg1/services/</div>
<div class="t" style="left:64.90px;top:78.04px;font-size:12.00px;color:#fff;font-weight:700;letter-spacing:0.6px;-webkit-text-stroke:0.35px #fff">FLOWY IT</div>
<div class="t" style="left:62.70px;top:95.54px;font-size:12.00px;color:#fff;font-weight:700;letter-spacing:0.9px;-webkit-text-stroke:0.35px #fff">COMPANY</div>
<div class="t" style="left:30.80px;top:135.94px;font-size:10.70px;color:rgba(255,255,255,.82);font-weight:400;transform:scaleX(0.9346);transform-origin:0 0;">Dashboard</div>
<div class="t" style="left:30.80px;top:190.62px;font-size:10.49px;color:rgba(255,255,255,.82);font-weight:400;transform:scaleX(0.9346);transform-origin:0 0;">Tables</div>
<div class="t" style="left:847.00px;top:86.91px;font-size:11.45px;color:#858796;font-weight:400;transform:scaleX(0.9346);transform-origin:0 0;">Admin Niflach</div>
<div class="t" style="left:190.00px;top:150.03px;font-size:12.25px;color:#1b5dcf;font-weight:700;transform:scaleX(0.9615);transform-origin:0 0;">DataTables Services Management</div>
<div class="a" style="left:190px;top:187.5px;width:108px;height:28px;background:#0d6efd;border-radius:4px"></div>
<div class="t" style="left:199.30px;top:196.76px;font-size:12.57px;color:#fff;font-weight:400;transform:scaleX(0.9346);transform-origin:0 0;">Add New Service</div>
<div class="t" style="left:189.60px;top:232.17px;font-size:12.20px;color:#212529;font-weight:400;transform:scaleX(0.9346);transform-origin:0 0;">Show</div>
<div class="a" style="left:221.3px;top:227.3px;width:30.3px;height:22.8px;background:#fff;border:1px solid #e6e6e8;border-radius:4px"></div>
<div class="t" style="left:227.60px;top:233.67px;font-size:11.02px;color:#212529;font-weight:400;transform:scaleX(0.9346);transform-origin:0 0;">10</div>
<svg class="a" style="left:233.6px;top:234.6px;" width="10" height="10" viewBox="0 0 10 10"><path d="M2.4 1.6 Q0.6 4.6 2.4 7.8" stroke="#555" stroke-width="1.1" fill="none"/><path d="M6.2 0.6 L9.2 3.8 H3.2Z M6.2 8.8 L9.2 5.6 H3.2Z" fill="#1a1a1a"/><rect x="5.2" y="3.6" width="2" height="2.2" fill="#1a1a1a"/></svg>
<div class="t" style="left:255.30px;top:232.40px;font-size:12.52px;color:#212529;font-weight:400;transform:scaleX(0.9346);transform-origin:0 0;">entries</div>
<div class="t" style="left:749.20px;top:234.38px;font-size:11.72px;color:#212529;font-weight:400;transform:scaleX(0.9346);transform-origin:0 0;">Search:</div>
<div class="a" style="left:792px;top:227.3px;width:134.5px;height:23.3px;background:#fff;border:1px solid #e6e6e8;border-radius:4px"></div>
<div class="a" style="left:190px;top:261.2px;width:736.5px;height:206px;border:1px solid #e8e9f0;background:#fff"></div>
<div class="a" style="left:236.4px;top:261.2px;width:1px;height:206px;background:#ebecf3"></div>
<div class="a" style="left:278.1px;top:261.2px;width:1px;height:206px;background:#ebecf3"></div>
<div class="a" style="left:395.2px;top:261.2px;width:1px;height:206px;background:#ebecf3"></div>
<div class="a" style="left:624.3px;top:261.2px;width:1px;height:206px;background:#ebecf3"></div>
<div class="a" style="left:685.2px;top:261.2px;width:1px;height:206px;background:#ebecf3"></div>
<div class="a" style="left:771px;top:261.2px;width:1px;height:206px;background:#ebecf3"></div>
<div class="a" style="left:835.6px;top:261.2px;width:1px;height:206px;background:#ebecf3"></div>
<div class="a" style="left:190px;top:291.2px;width:736.5px;height:1.6px;background:#e1e3ee"></div>
<div class="t" style="left:196.20px;top:271.80px;font-size:12.17px;color:#111;font-weight:700;transform:scaleX(0.9615);transform-origin:0 0;">No</div>
<svg class="a" style="left:219.20000000000002px;top:268px;" width="10" height="10" viewBox="0 0 10 10"><path d="M2.5 1 V8.6 M0.8 2.8 L2.5 1 L4.2 2.8" stroke="#222" stroke-width="1.05" fill="none"/><path d="M7.5 1.4 V9 M5.8 7.2 L7.5 9 L9.2 7.2" stroke="#c8cad2" stroke-width="1.05" fill="none"/></svg>
<div class="t" style="left:242.60px;top:271.80px;font-size:12.17px;color:#111;font-weight:700;transform:scaleX(0.9615);transform-origin:0 0;">ID</div>
<svg class="a" style="left:260.90000000000003px;top:268px;" width="10" height="10" viewBox="0 0 10 10"><path d="M2.5 1 V8.6 M0.8 2.8 L2.5 1 L4.2 2.8" stroke="#c8cad2" stroke-width="1.05" fill="none"/><path d="M7.5 1.4 V9 M5.8 7.2 L7.5 9 L9.2 7.2" stroke="#c8cad2" stroke-width="1.05" fill="none"/></svg>
<div class="t" style="left:284.30px;top:271.80px;font-size:12.17px;color:#111;font-weight:700;transform:scaleX(0.9615);transform-origin:0 0;">Name</div>
<svg class="a" style="left:378.0px;top:268px;" width="10" height="10" viewBox="0 0 10 10"><path d="M2.5 1 V8.6 M0.8 2.8 L2.5 1 L4.2 2.8" stroke="#c8cad2" stroke-width="1.05" fill="none"/><path d="M7.5 1.4 V9 M5.8 7.2 L7.5 9 L9.2 7.2" stroke="#c8cad2" stroke-width="1.05" fill="none"/></svg>
<div class="t" style="left:401.40px;top:271.80px;font-size:12.17px;color:#111;font-weight:700;transform:scaleX(0.9615);transform-origin:0 0;">Description</div>
<svg class="a" style="left:607.0999999999999px;top:268px;" width="10" height="10" viewBox="0 0 10 10"><path d="M2.5 1 V8.6 M0.8 2.8 L2.5 1 L4.2 2.8" stroke="#c8cad2" stroke-width="1.05" fill="none"/><path d="M7.5 1.4 V9 M5.8 7.2 L7.5 9 L9.2 7.2" stroke="#c8cad2" stroke-width="1.05" fill="none"/></svg>
<div class="t" style="left:630.50px;top:271.80px;font-size:12.17px;color:#111;font-weight:700;transform:scaleX(0.9615);transform-origin:0 0;">Price</div>
<svg class="a" style="left:668.0px;top:268px;" width="10" height="10" viewBox="0 0 10 10"><path d="M2.5 1 V8.6 M0.8 2.8 L2.5 1 L4.2 2.8" stroke="#c8cad2" stroke-width="1.05" fill="none"/><path d="M7.5 1.4 V9 M5.8 7.2 L7.5 9 L9.2 7.2" stroke="#c8cad2" stroke-width="1.05" fill="none"/></svg>
<div class="t" style="left:691.40px;top:271.80px;font-size:12.17px;color:#111;font-weight:700;transform:scaleX(0.9615);transform-origin:0 0;">Category</div>
<svg class="a" style="left:753.8px;top:268px;" width="10" height="10" viewBox="0 0 10 10"><path d="M2.5 1 V8.6 M0.8 2.8 L2.5 1 L4.2 2.8" stroke="#c8cad2" stroke-width="1.05" fill="none"/><path d="M7.5 1.4 V9 M5.8 7.2 L7.5 9 L9.2 7.2" stroke="#c8cad2" stroke-width="1.05" fill="none"/></svg>
<div class="t" style="left:777.20px;top:271.80px;font-size:12.17px;color:#111;font-weight:700;transform:scaleX(0.9615);transform-origin:0 0;">Status</div>
<svg class="a" style="left:818.4px;top:268px;" width="10" height="10" viewBox="0 0 10 10"><path d="M2.5 1 V8.6 M0.8 2.8 L2.5 1 L4.2 2.8" stroke="#c8cad2" stroke-width="1.05" fill="none"/><path d="M7.5 1.4 V9 M5.8 7.2 L7.5 9 L9.2 7.2" stroke="#c8cad2" stroke-width="1.05" fill="none"/></svg>
<div class="t" style="left:841.80px;top:271.80px;font-size:12.17px;color:#111;font-weight:700;transform:scaleX(0.9615);transform-origin:0 0;">Actions</div>
<svg class="a" style="left:909.3px;top:268px;" width="10" height="10" viewBox="0 0 10 10"><path d="M2.5 1 V8.6 M0.8 2.8 L2.5 1 L4.2 2.8" stroke="#c8cad2" stroke-width="1.05" fill="none"/><path d="M7.5 1.4 V9 M5.8 7.2 L7.5 9 L9.2 7.2" stroke="#c8cad2" stroke-width="1.05" fill="none"/></svg>
<div class="t" style="left:195.90px;top:303.45px;font-size:12.70px;color:#1a1d21;font-weight:400;transform:scaleX(0.937);transform-origin:0 0;">1</div>
<div class="t" style="left:242.30px;top:303.45px;font-size:12.70px;color:#1a1d21;font-weight:400;transform:scaleX(0.937);transform-origin:0 0;">3</div>
<div class="t" style="left:284.00px;top:303.45px;font-size:12.70px;color:#1a1d21;font-weight:400;transform:scaleX(0.937);transform-origin:0 0;">IT Consulting</div>
<div class="t" style="left:401.10px;top:303.45px;font-size:12.70px;color:#1a1d21;font-weight:400;transform:scaleX(0.937);transform-origin:0 0;">Konsultasi solusi IT</div>
<div class="t" style="left:630.20px;top:303.45px;font-size:12.70px;color:#1a1d21;font-weight:400;transform:scaleX(0.937);transform-origin:0 0;">3000.00</div>
<div class="t" style="left:691.10px;top:303.45px;font-size:12.70px;color:#1a1d21;font-weight:400;transform:scaleX(0.937);transform-origin:0 0;">Consulting</div>
<div class="t" style="left:776.90px;top:303.45px;font-size:12.70px;color:#1a1d21;font-weight:400;transform:scaleX(0.937);transform-origin:0 0;">inactive</div>
<div class="a" style="left:842.1px;top:299.1px;width:30.1px;height:22.7px;background:#ffc107;border-radius:3px"></div>
<div class="t" style="left:849.30px;top:304.92px;font-size:11.56px;color:#1d1a0a;font-weight:400;transform:scaleX(0.9346);transform-origin:0 0;letter-spacing:-0.25px">Edit</div>
<div class="a" style="left:876.1px;top:299.1px;width:42.8px;height:22.7px;background:#dc3545;border-radius:3px"></div>
<div class="t" style="left:883.00px;top:304.92px;font-size:11.56px;color:#fff;font-weight:400;transform:scaleX(0.9346);transform-origin:0 0;letter-spacing:-0.2px">Delete</div>
<div class="t" style="left:195.90px;top:338.20px;font-size:12.70px;color:#1a1d21;font-weight:400;transform:scaleX(0.937);transform-origin:0 0;">2</div>
<div class="t" style="left:242.30px;top:338.20px;font-size:12.70px;color:#1a1d21;font-weight:400;transform:scaleX(0.937);transform-origin:0 0;">4</div>
<div class="t" style="left:284.00px;top:338.20px;font-size:12.70px;color:#1a1d21;font-weight:400;transform:scaleX(0.937);transform-origin:0 0;">Mobile App Design</div>
<div class="t" style="left:401.10px;top:338.20px;font-size:12.70px;color:#1a1d21;font-weight:400;transform:scaleX(0.937);transform-origin:0 0;">Desain antarmuka aplikasi mobile</div>
<div class="t" style="left:630.20px;top:338.20px;font-size:12.70px;color:#1a1d21;font-weight:400;transform:scaleX(0.937);transform-origin:0 0;">3000.00</div>
<div class="t" style="left:691.10px;top:338.20px;font-size:12.70px;color:#1a1d21;font-weight:400;transform:scaleX(0.937);transform-origin:0 0;">Design</div>
<div class="t" style="left:776.90px;top:338.20px;font-size:12.70px;color:#1a1d21;font-weight:400;transform:scaleX(0.937);transform-origin:0 0;">active</div>
<div class="a" style="left:842.1px;top:333.85px;width:30.1px;height:22.7px;background:#ffc107;border-radius:3px"></div>
<div class="t" style="left:849.30px;top:339.67px;font-size:11.56px;color:#1d1a0a;font-weight:400;transform:scaleX(0.9346);transform-origin:0 0;letter-spacing:-0.25px">Edit</div>
<div class="a" style="left:876.1px;top:333.85px;width:42.8px;height:22.7px;background:#dc3545;border-radius:3px"></div>
<div class="t" style="left:883.00px;top:339.67px;font-size:11.56px;color:#fff;font-weight:400;transform:scaleX(0.9346);transform-origin:0 0;letter-spacing:-0.2px">Delete</div>
<div class="t" style="left:195.90px;top:372.95px;font-size:12.70px;color:#1a1d21;font-weight:400;transform:scaleX(0.937);transform-origin:0 0;">3</div>
<div class="t" style="left:242.30px;top:372.95px;font-size:12.70px;color:#1a1d21;font-weight:400;transform:scaleX(0.937);transform-origin:0 0;">5</div>
<div class="t" style="left:284.00px;top:372.95px;font-size:12.70px;color:#1a1d21;font-weight:400;transform:scaleX(0.937);transform-origin:0 0;">Cloud Solutions</div>
<div class="t" style="left:401.10px;top:372.95px;font-size:12.70px;color:#1a1d21;font-weight:400;transform:scaleX(0.937);transform-origin:0 0;">Pengelolaan solusi cloud untuk bisnis</div>
<div class="t" style="left:630.20px;top:372.95px;font-size:12.70px;color:#1a1d21;font-weight:400;transform:scaleX(0.937);transform-origin:0 0;">8000.00</div>
<div class="t" style="left:691.10px;top:372.95px;font-size:12.70px;color:#1a1d21;font-weight:400;transform:scaleX(0.937);transform-origin:0 0;">Infrastructure</div>
<div class="t" style="left:776.90px;top:372.95px;font-size:12.70px;color:#1a1d21;font-weight:400;transform:scaleX(0.937);transform-origin:0 0;">active</div>
<div class="a" style="left:842.1px;top:368.6px;width:30.1px;height:22.7px;background:#ffc107;border-radius:3px"></div>
<div class="t" style="left:849.30px;top:374.42px;font-size:11.56px;color:#1d1a0a;font-weight:400;transform:scaleX(0.9346);transform-origin:0 0;letter-spacing:-0.25px">Edit</div>
<div class="a" style="left:876.1px;top:368.6px;width:42.8px;height:22.7px;background:#dc3545;border-radius:3px"></div>
<div class="t" style="left:883.00px;top:374.42px;font-size:11.56px;color:#fff;font-weight:400;transform:scaleX(0.9346);transform-origin:0 0;letter-spacing:-0.2px">Delete</div>
<div class="t" style="left:195.90px;top:407.70px;font-size:12.70px;color:#1a1d21;font-weight:400;transform:scaleX(0.937);transform-origin:0 0;">4</div>
<div class="t" style="left:242.30px;top:407.70px;font-size:12.70px;color:#1a1d21;font-weight:400;transform:scaleX(0.937);transform-origin:0 0;">7</div>
<div class="t" style="left:284.00px;top:407.70px;font-size:12.70px;color:#1a1d21;font-weight:400;transform:scaleX(0.937);transform-origin:0 0;">Web Development</div>
<div class="t" style="left:401.10px;top:407.70px;font-size:12.70px;color:#1a1d21;font-weight:400;transform:scaleX(0.937);transform-origin:0 0;">Pembuatan website profesional</div>
<div class="t" style="left:630.20px;top:407.70px;font-size:12.70px;color:#1a1d21;font-weight:400;transform:scaleX(0.937);transform-origin:0 0;">5000.00</div>
<div class="t" style="left:691.10px;top:407.70px;font-size:12.70px;color:#1a1d21;font-weight:400;transform:scaleX(0.937);transform-origin:0 0;">Development</div>
<div class="t" style="left:776.90px;top:407.70px;font-size:12.70px;color:#1a1d21;font-weight:400;transform:scaleX(0.937);transform-origin:0 0;">active</div>
<div class="a" style="left:842.1px;top:403.35px;width:30.1px;height:22.7px;background:#ffc107;border-radius:3px"></div>
<div class="t" style="left:849.30px;top:409.17px;font-size:11.56px;color:#1d1a0a;font-weight:400;transform:scaleX(0.9346);transform-origin:0 0;letter-spacing:-0.25px">Edit</div>
<div class="a" style="left:876.1px;top:403.35px;width:42.8px;height:22.7px;background:#dc3545;border-radius:3px"></div>
<div class="t" style="left:883.00px;top:409.17px;font-size:11.56px;color:#fff;font-weight:400;transform:scaleX(0.9346);transform-origin:0 0;letter-spacing:-0.2px">Delete</div>
<div class="t" style="left:195.90px;top:442.45px;font-size:12.70px;color:#1a1d21;font-weight:400;transform:scaleX(0.937);transform-origin:0 0;">5</div>
<div class="t" style="left:242.30px;top:442.45px;font-size:12.70px;color:#1a1d21;font-weight:400;transform:scaleX(0.937);transform-origin:0 0;">8</div>
<div class="t" style="left:284.00px;top:442.45px;font-size:12.70px;color:#1a1d21;font-weight:400;transform:scaleX(0.937);transform-origin:0 0;">Cybersecurity</div>
<div class="t" style="left:401.10px;top:442.45px;font-size:12.70px;color:#1a1d21;font-weight:400;transform:scaleX(0.937);transform-origin:0 0;">Keamanan siber untuk melindungi cyber</div>
<div class="t" style="left:630.20px;top:442.45px;font-size:12.70px;color:#1a1d21;font-weight:400;transform:scaleX(0.937);transform-origin:0 0;">10000.00</div>
<div class="t" style="left:691.10px;top:442.45px;font-size:12.70px;color:#1a1d21;font-weight:400;transform:scaleX(0.937);transform-origin:0 0;">Security</div>
<div class="t" style="left:776.90px;top:442.45px;font-size:12.70px;color:#1a1d21;font-weight:400;transform:scaleX(0.937);transform-origin:0 0;">active</div>
<div class="a" style="left:842.1px;top:438.1px;width:30.1px;height:22.7px;background:#ffc107;border-radius:3px"></div>
<div class="t" style="left:849.30px;top:443.92px;font-size:11.56px;color:#1d1a0a;font-weight:400;transform:scaleX(0.9346);transform-origin:0 0;letter-spacing:-0.25px">Edit</div>
<div class="a" style="left:876.1px;top:438.1px;width:42.8px;height:22.7px;background:#dc3545;border-radius:3px"></div>
<div class="t" style="left:883.00px;top:443.92px;font-size:11.56px;color:#fff;font-weight:400;transform:scaleX(0.9346);transform-origin:0 0;letter-spacing:-0.2px">Delete</div>
<div class="t" style="left:189.60px;top:485.82px;font-size:12.73px;color:#212529;font-weight:400;transform:scaleX(0.9346);transform-origin:0 0;">Showing 1 to 5 of 5 entries</div>
<div class="a" style="left:795.2px;top:473.2px;width:131.7px;height:25.4px;background:#fff;border:1px solid #e3e6ea;border-radius:4px"></div>
<div class="a" style="left:858.4px;top:473.5px;width:25.4px;height:24.7px;background:#4e73df"></div>
<div class="t" style="left:804.90px;top:481.04px;font-size:12.36px;color:#858796;font-weight:400;transform:scaleX(0.9346);transform-origin:0 0;">Previous</div>
<div class="t" style="left:868.20px;top:480.99px;font-size:12.41px;color:#fff;font-weight:400;transform:scaleX(0.9346);transform-origin:0 0;">1</div>
<div class="t" style="left:893.00px;top:480.72px;font-size:12.73px;color:#858796;font-weight:400;transform:scaleX(0.9346);transform-origin:0 0;">Next</div></body></html>
